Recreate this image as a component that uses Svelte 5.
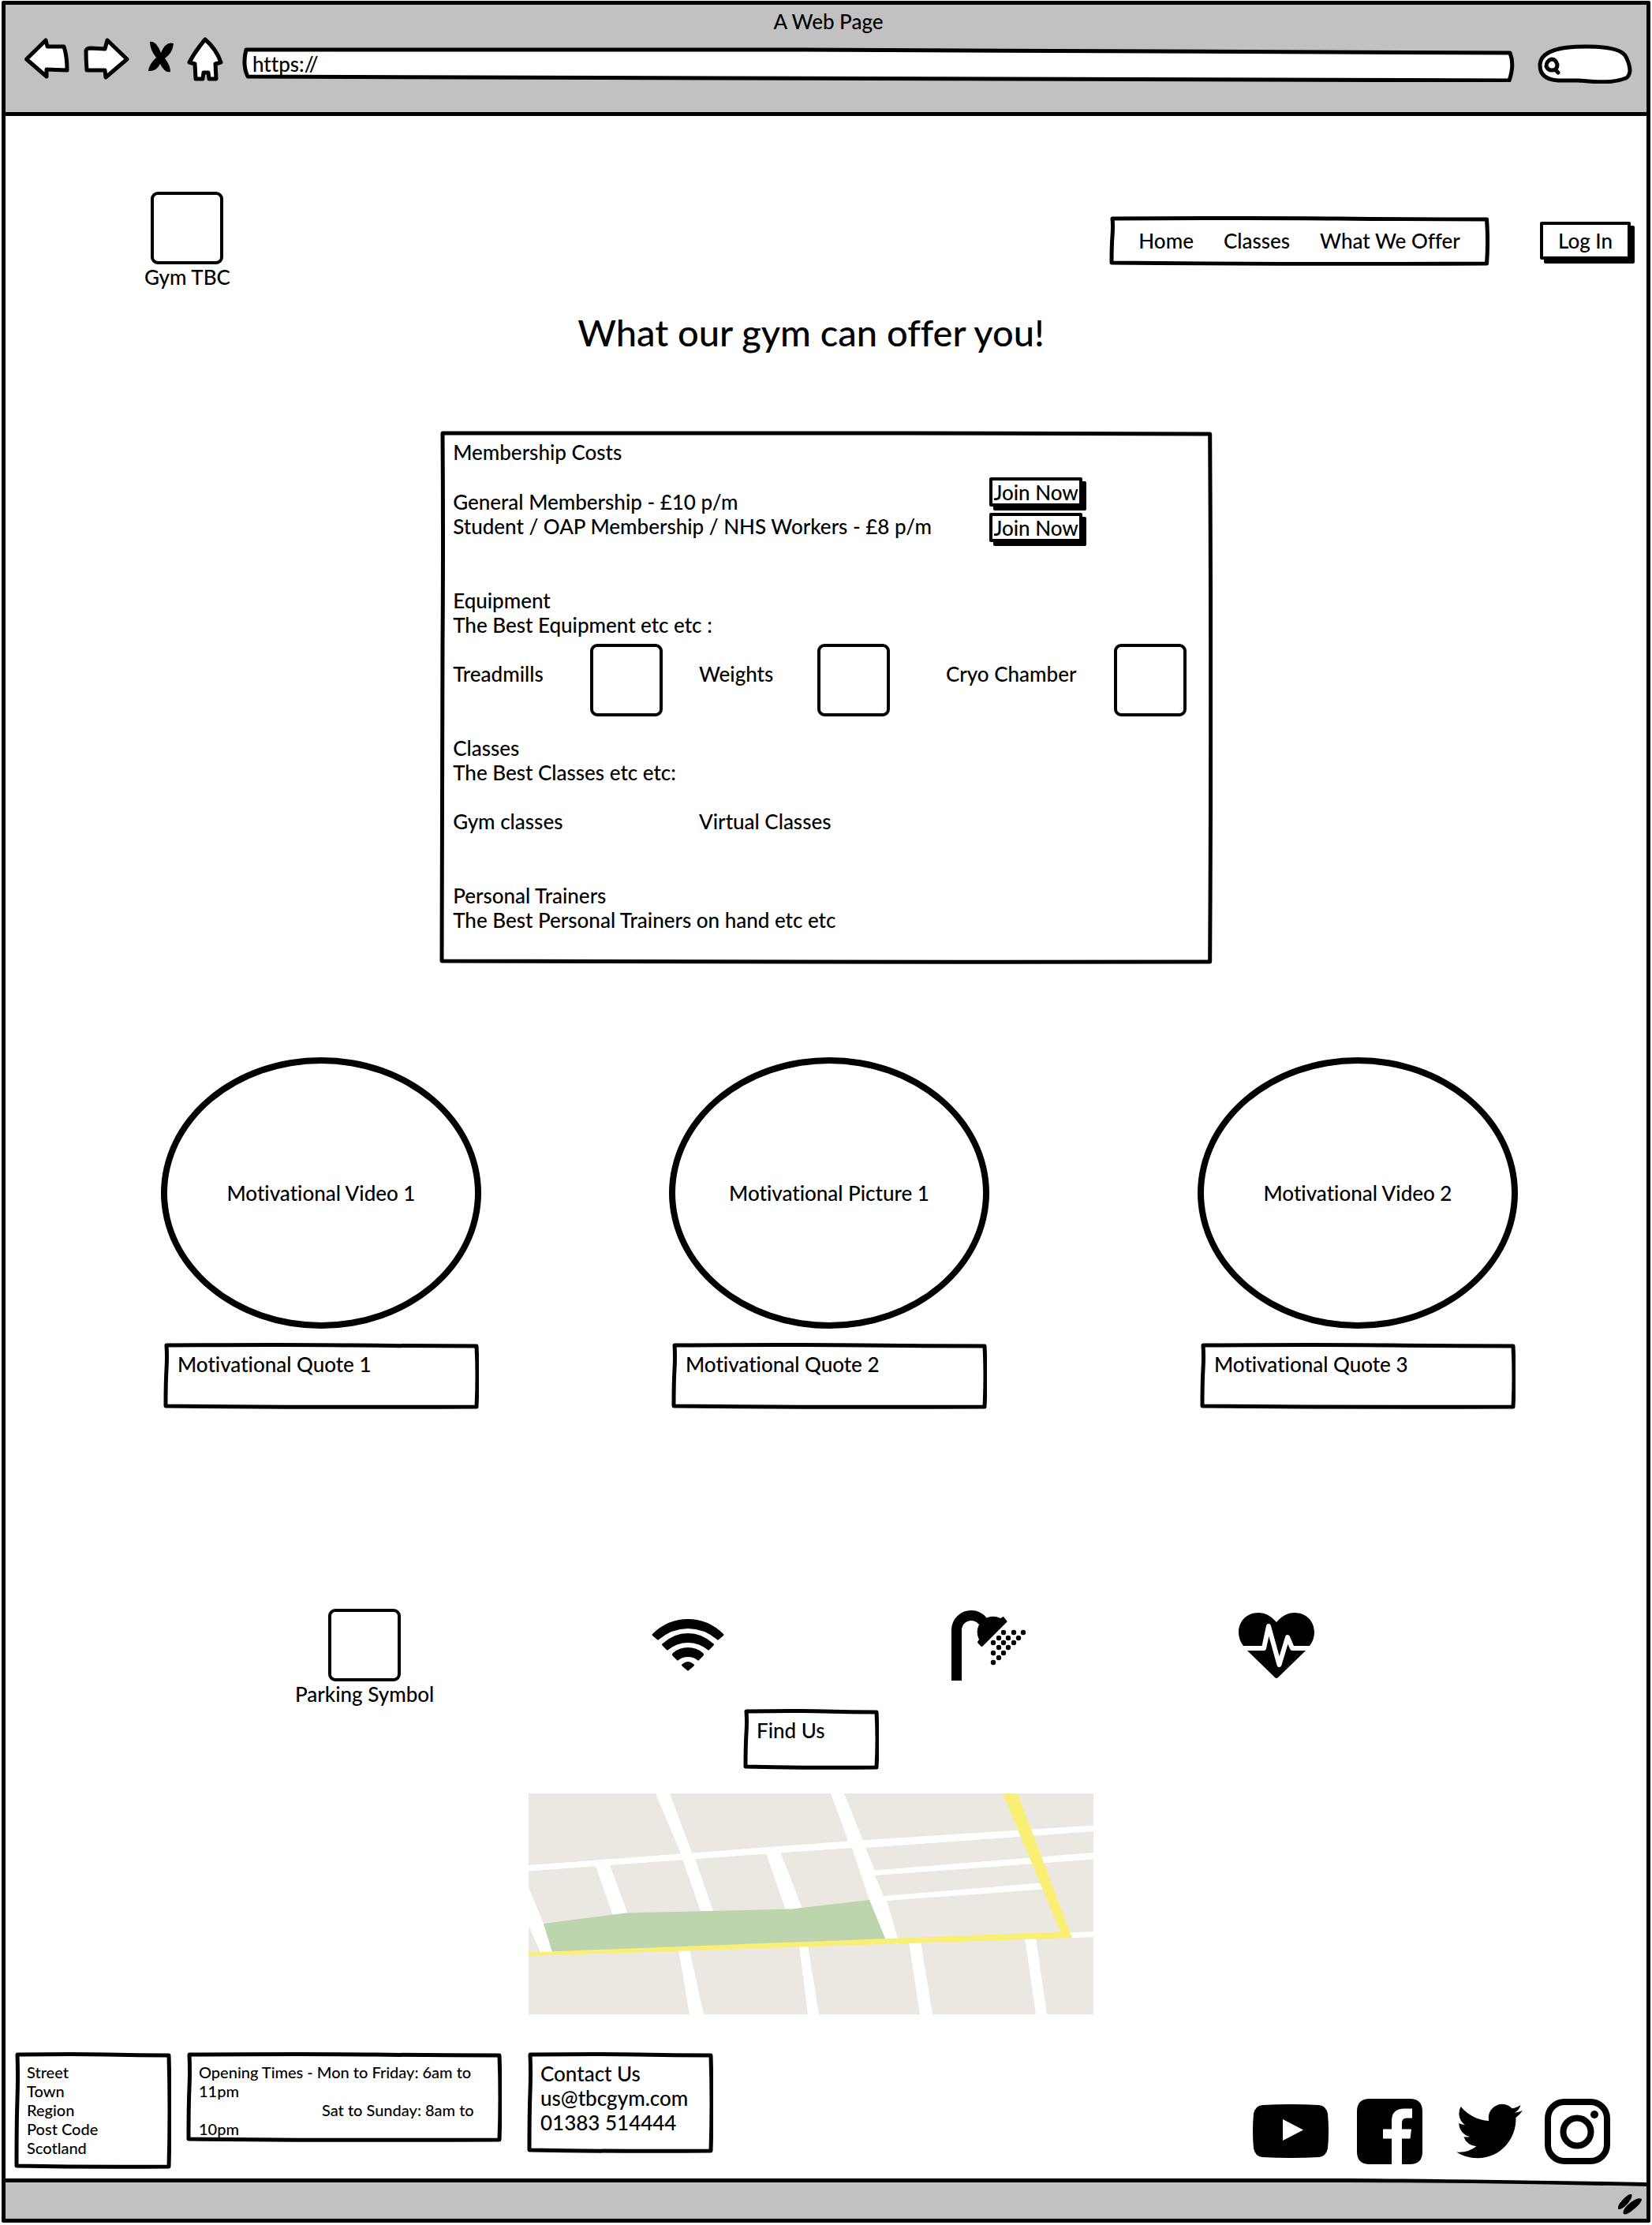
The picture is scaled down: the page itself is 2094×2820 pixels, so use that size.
<script>
  const pictures = [
    { title: 'Motivational Video 1', quote: 'Motivational Quote 1' },
    { title: 'Motivational Picture 1', quote: 'Motivational Quote 2' },
    { title: 'Motivational Video 2', quote: 'Motivational Quote 3' },
  ];

  const address = ['Street', 'Town', 'Region', 'Post Code', 'Scotland'];

  const drops = [
    [66, 28], [79, 28], [91, 28],
    [60, 35], [72, 35], [85, 35],
    [53, 41], [66, 41], [79, 41],
    [60, 47], [72, 47],
    [53, 54], [66, 54],
    [60, 60],
    [53, 66],
  ];

  // Outline of a box whose sides bow slightly, as if drawn by hand.
  function outline(w, h) {
    return `M4 3 Q${w * 0.4} 2 ${w * 0.6} 3 T${w - 3} 4 Q${w - 1} ${h * 0.5} ${w - 3} ${h - 3} Q${w * 0.5} ${h - 2} 3 ${h - 4} Q3 ${h * 0.6} 4 ${h * 0.4} T4 3 Z`;
  }
</script>

{#snippet sketch(w, h)}
  <svg class="sketch" viewBox="0 0 {w} {h}" preserveAspectRatio="none" aria-hidden="true">
    <path d={outline(w, h)} />
  </svg>
{/snippet}

<div class="browser">
  <header class="toolbar">
    <div class="page-title">A Web Page</div>
    <div class="controls">
      <button class="tool back" aria-label="Back">
        <svg viewBox="0 0 57 54" width="57" height="54">
          <path class="ink" d="M2.5 28 L27 4 L29 12 L50 12 Q54 24 54 42 L28 41 L28 50 Z" />
        </svg>
      </button>
      <button class="tool forward" aria-label="Forward">
        <svg viewBox="0 0 59 54" width="59" height="54">
          <path class="ink" d="M4 17 Q5 14 10 14 L28 15 L31 4 L56 28 L29 51 L28 42 L5 42 Q4 28 4 17 Z" />
        </svg>
      </button>
      <button class="tool stop" aria-label="Stop">
        <svg viewBox="0 0 34 54" width="34" height="54">
          <path d="M3 6 Q11 4 17 20 Q23 5 33 8 Q32 20 22 27 Q29 36 29 44 Q22 46 16 34 Q11 44 1 43 Q2 34 11 26 Q3 16 3 6 Z" />
        </svg>
      </button>
      <button class="tool home" aria-label="Home page">
        <svg viewBox="0 0 46 56" width="46" height="56">
          <path class="ink" d="M23 3 Q37 15 43 32 L36 34 L37 53 L28 53 L27 45 L21 45 L20 53 L11 53 L10 34 L3 32 Q11 17 23 3 Z" />
        </svg>
      </button>
      <div class="url">
        <svg class="sketch" viewBox="0 0 1612 44" preserveAspectRatio="none" aria-hidden="true">
          <path d="M5 3 L700 3 Q1200 4 1606 7 Q1612 22 1605 42 L600 39 L7 37 Q0 22 5 3 Z" />
        </svg>
        <input type="text" value="https://" aria-label="Address" />
      </div>
      <div class="search">
        <svg class="sketch" viewBox="0 0 120 50" preserveAspectRatio="none" aria-hidden="true">
          <path d="M3 27 C3 9 26 3 62 3 C92 3 108 8 112 16 Q117 26 117 34 Q116 41 112 43 C94 50 76 48 52 46 Q42 46 26 46 C10 45 3 38 3 27 Z" />
        </svg>
        <svg class="lens" viewBox="0 0 21 23" width="21" height="23" aria-hidden="true">
          <path d="M10 3 C5 4 3 8 3 12 Q5 17 10 17 Q17 17 17 10 Q15 3 10 3 M14 16 L18 20" />
        </svg>
        <input type="search" aria-label="Search" />
      </div>
    </div>
  </header>

  <main>
    <div class="top">
      <div class="labelled">
        <div class="placeholder"></div>
        <span>Gym TBC</span>
      </div>
      <nav>
        {@render sketch(480, 64)}
        <a href="#home">Home</a>
        <a href="#classes">Classes</a>
        <a href="#offer">What We Offer</a>
      </nav>
      <button class="raised login">Log In</button>
    </div>

    <h1>What our gym can offer you!</h1>

    <section class="panel" id="offer">
      {@render sketch(980, 675)}
      <div class="membership">
        <div>
          <h2>Membership Costs</h2>
          <div class="plans">
            <p>General Membership - £10 p/m</p>
            <p>Student / OAP Membership / NHS Workers - £8 p/m</p>
          </div>
        </div>
        <div class="joins">
          <button class="raised" aria-label="Join Now, general">Join Now</button>
          <button class="raised" aria-label="Join Now, student">Join Now</button>
        </div>
      </div>

      <div class="block">
        <h2>Equipment</h2>
        <p>The Best Equipment etc etc :</p>
        <div class="columns kit">
          <span>Treadmills</span>
          <div class="placeholder"></div>
          <span>Weights</span>
          <div class="placeholder"></div>
          <span>Cryo Chamber</span>
          <div class="placeholder"></div>
        </div>
      </div>

      <div class="block" id="classes">
        <h2>Classes</h2>
        <p>The Best Classes etc etc:</p>
        <div class="columns kinds">
          <span class="wide">Gym classes</span>
          <span class="wide">Virtual Classes</span>
        </div>
      </div>

      <div class="block">
        <h2>Personal Trainers</h2>
        <p>The Best Personal Trainers on hand etc etc</p>
      </div>
    </section>

    <section class="gallery">
      {#each pictures as item}
        <figure>
          <div class="oval">{item.title}</div>
          <figcaption>
            {@render sketch(400, 84)}
            {item.quote}
          </figcaption>
        </figure>
      {/each}
    </section>

    <section class="amenities">
      <div class="labelled">
        <div class="placeholder"></div>
        <span>Parking Symbol</span>
      </div>
      <div class="slot">
        <svg viewBox="0 0 92 66" width="92" height="66" role="img" aria-label="Wi-Fi">
          <path d="M1 19 Q20 0 46 0 Q72 0 91 19 Q92 20 91 21 L85 26 Q84 27 83 26 Q66 12 46 12 Q26 12 9 26 Q8 27 7 26 L1 21 Q0 20 1 19 Z" />
          <path d="M14 31 Q28 18 46 18 Q64 18 78 31 Q80 32 78 34 L73 39 Q72 40 71 39 Q60 30 46 30 Q32 30 21 39 Q20 40 19 39 L14 34 Q12 32 14 31 Z" />
          <path d="M27 43 Q35 36 46 36 Q57 36 65 43 Q67 45 65 47 L60 52 Q59 53 58 52 Q53 48 46 48 Q39 48 34 52 Q33 53 32 52 L27 47 Q25 45 27 43 Z" />
          <path d="M39 57 Q46 51 53 57 Q55 58 53 60 L47 65 Q46 66 45 65 L39 60 Q37 58 39 57 Z" />
        </svg>
      </div>
      <div class="slot">
        <svg viewBox="0 0 95 89" width="95" height="89" role="img" aria-label="Showers">
          <path class="pipe" d="M6.5 89 V25 A18.500 18.500 0 0 1 25 6.500 Q34 6.500 40 14" />
          <path d="M62 10 A20 20 0 0 0 35 37 L33 40 Q33 41 34 42 L38 46 Q39 46 40 45 L70 15 Q71 14 70 13 L66 8 Q65 8 64 9 Z" />
          {#each drops as [x, y]}
            <circle cx={x} cy={y} r="3.2" />
          {/each}
        </svg>
      </div>
      <div class="slot">
        <svg viewBox="0 0 96 83" width="96" height="83" role="img" aria-label="Heart rate">
          <path d="M48 12 C41 4 34 0 25 0 C10 0 0 11 0 25 Q0 34 6 42 Q8 46 12 49 L46 82 Q48 84 50 82 L84 49 Q88 46 90 42 Q96 34 96 25 C96 11 86 0 71 0 C62 0 55 4 48 12 Z" />
          <path class="pulse" d="M-2 45 H32 L38 17 L51.500 66 L62 31 L68 45 H98" />
        </svg>
      </div>
    </section>

    <section class="find">
      <div class="note find-us">
        {@render sketch(172, 77)}
        Find Us
      </div>
      <svg class="map" viewBox="0 0 716 280" role="img" aria-label="Map">
        <rect width="716" height="280" fill="#ebe8e1" />
        <g fill="#fff">
          <path d="M161 0 H179 L207 75 L211 83 L234 149 H218 L196 86 L193 76 Z" />
          <path d="M0 91 L193 76.500 L405 60.500 L716 40.500 V48 L427 69 L410 69 L211 83 L0 98.500 Z" />
          <path d="M383 0 H400 L424 60 L427 69 L439 98 V104 L450 130 L454 136 L468 184 H452 L432 135 L410 69 L405 60 Z" />
          <path d="M438 97.500 L716 75 V83.500 L438 104 Z" />
          <path d="M449 130 L649 113.500 L666 120 L652 121.500 L453 136 Z" />
          <path d="M85 92 L103 91 L126 153 L107 155 Z" />
          <path d="M301 76 L319 74 L347 146 L326 148 Z" />
          <path d="M0 119 L19 165 L30 201 H15 L0 168 Z" />
          <path d="M686 176.500 L716 175 V182 L688 183 Z" />
          <path d="M190 198 H204 L222 280 H204 Z" />
          <path d="M343 193 H354 L368 280 H354 Z" />
          <path d="M482 188 H497 L512 280 H496 Z" />
          <path d="M629 183 H643 L657 280 H643 Z" />
        </g>
        <path fill="#bcd5ad" d="M19 165 L124 151.500 L334 146.500 L432 135 L452.500 185 L30 201 Z" />
        <path fill="#faef75" d="M601 0 H620 L689 183 L0 206 V201.500 L674 175.500 Z" />
      </svg>
    </section>

    <footer>
      <address class="note small where">
        {@render sketch(199, 148)}
        {#each address as line}
          <div>{line}</div>
        {/each}
      </address>
      <div class="note small hours">
        {@render sketch(400, 114)}
        <div>Opening Times - Mon to Friday: 6am to</div>
        <div>11pm</div>
        <div class="indent">Sat to Sunday: 8am to</div>
        <div>10pm</div>
      </div>
      <div class="note contact">
        {@render sketch(236, 128)}
        <div>Contact Us</div>
        <div>us@tbcgym.com</div>
        <div>01383 514444</div>
      </div>
      <div class="social">
        <a href="#youtube" aria-label="YouTube">
          <svg viewBox="0 0 96 68" width="96" height="68">
            <path fill-rule="evenodd" d="M12 1 Q48 -1 84 1 Q93 2 95 12 Q97 34 95 56 Q93 66 84 67 Q48 69 12 67 Q3 66 1 56 Q-1 34 1 12 Q3 2 12 1 Z M38 19 V46 L64 32.500 Z" />
          </svg>
        </a>
        <a href="#facebook" aria-label="Facebook">
          <svg viewBox="0 0 83 83" width="83" height="83">
            <path d="M16 0 H67 Q83 0 83 16 V67 Q83 83 67 83 H57 V50.500 H67.500 L69 38.500 H57 V31 Q57 24.500 63 24.500 H70 V12.500 H60 Q44 12.500 44 28 V38.500 H33 V50.500 H44 V83 H16 Q0 83 0 67 V16 Q0 0 16 0 Z" />
          </svg>
        </a>
        <a href="#twitter" aria-label="Twitter">
          <svg viewBox="0 0 24 24" width="84" height="84">
            <path d="M23.953 4.57a10 10 0 01-2.825.775 4.958 4.958 0 002.163-2.723c-.951.555-2.005.959-3.127 1.184a4.92 4.92 0 00-8.384 4.482C7.69 8.095 4.067 6.13 1.64 3.162a4.822 4.822 0 00-.666 2.475c0 1.71.87 3.213 2.188 4.096a4.904 4.904 0 01-2.228-.616v.06a4.923 4.923 0 003.946 4.827 4.996 4.996 0 01-2.212.085 4.936 4.936 0 004.604 3.417 9.867 9.867 0 01-6.102 2.105c-.39 0-.779-.023-1.17-.067a13.995 13.995 0 007.557 2.209c9.053 0 13.998-7.496 13.998-13.985 0-.21 0-.42-.015-.63A9.935 9.935 0 0024 4.59z" />
          </svg>
        </a>
        <a href="#instagram" aria-label="Instagram">
          <svg viewBox="0 0 83 83" width="83" height="83">
            <rect class="ring" x="4" y="4" width="75" height="75" rx="21" />
            <circle class="ring" cx="41" cy="42" r="17.500" />
            <circle cx="63" cy="20" r="5" />
          </svg>
        </a>
      </div>
    </footer>
  </main>

  <div class="status">
    <svg class="edge" viewBox="0 0 2080 10" preserveAspectRatio="none" aria-hidden="true">
      <path fill="#fff" d="M0 0 H2080 V6 L1830 2 H0 Z" />
      <path d="M0 0 H1700 Q1850 1 2080 5 V10 Q1850 5 1700 5 H0 Z" />
    </svg>
    <svg class="grip" viewBox="0 0 31 26" width="31" height="26" aria-hidden="true">
      <path d="M0 19 Q-1 14 5 8 Q13 -1 17 0 Q19 3 13 11 Q6 19 1 19 Z" />
      <path d="M7 25 Q5 20 13 13 Q24 3 30 6 Q30 11 20 19 Q11 27 7 25 Z" />
    </svg>
  </div>
</div>

<style>
  :global(body) {
    background: #fff;
  }

  .browser {
    margin: 1px 2px;
    border: 5px solid #000;
    border-radius: 2px;
    font-family: Lato, "Liberation Sans", sans-serif;
    font-size: 26px;
    font-weight: 500;
    font-variant-ligatures: none;
    line-height: 31px;
    color: #000;
  }

  button,
  input {
    font: inherit;
    color: inherit;
    padding: 0;
    border: 0;
    background: none;
  }

  a {
    color: inherit;
    text-decoration: none;
  }

  h1,
  h2,
  p,
  figure {
    margin: 0;
    font-weight: inherit;
  }

  h2 {
    font-size: inherit;
  }

  svg {
    display: block;
  }

  .sketch {
    position: absolute;
    inset: 0;
    width: 100%;
    height: 100%;
    z-index: -1;
  }

  .sketch path {
    fill: #fff;
    stroke: #000;
    stroke-width: 5px;
    stroke-linejoin: round;
  }

  .toolbar {
    background: #c1c1c1;
    border-bottom: 5px solid #000;
    padding: 6px 18px 36px 24px;
  }

  .page-title {
    text-align: center;
  }

  .controls {
    display: flex;
    align-items: flex-start;
    padding-top: 4px;
  }

  .tool {
    flex: none;
  }

  .forward {
    margin-left: 17px;
  }

  .stop {
    margin-left: 23px;
  }

  .home {
    margin-left: 16px;
  }

  .ink {
    fill: #fff;
    stroke: #000;
    stroke-width: 5px;
    stroke-linejoin: round;
  }

  .url {
    position: relative;
    z-index: 0;
    flex: 1;
    height: 44px;
    margin: 13px 29px 0 24px;
    padding: 4px 13px;
    box-sizing: border-box;
  }

  .url input {
    display: block;
    width: 100%;
    height: 33px;
  }

  .search {
    position: relative;
    z-index: 0;
    flex: none;
    display: flex;
    width: 120px;
    height: 50px;
    margin-top: 9px;
    padding: 16px 12px 0 8px;
    box-sizing: border-box;
  }

  .search input {
    flex: 1;
    min-width: 0;
    height: 23px;
  }

  .lens {
    flex: none;
    fill: none;
    stroke: #000;
    stroke-width: 5px;
    stroke-linecap: round;
  }

  .top {
    display: flex;
    align-items: center;
    padding: 96px 20px 0 176px;
  }

  .labelled {
    display: flex;
    flex-direction: column;
    align-items: center;
    gap: 1px;
    width: max-content;
  }

  .placeholder {
    width: 92px;
    height: 92px;
    box-sizing: border-box;
    border: 4px solid #000;
    border-radius: 9px;
    background: #fff;
  }

  nav {
    position: relative;
    z-index: 0;
    display: flex;
    gap: 38px;
    margin-left: auto;
    padding: 16px 37px;
  }

  .raised {
    height: 37px;
    padding: 0 1px;
    border: 4px solid #000;
    border-radius: 2px;
    background: #fff;
    box-shadow: 5px 5px 0 #000;
    line-height: 28px;
    white-space: nowrap;
  }

  .login {
    height: 48px;
    margin-left: 64px;
    padding: 0 19px;
  }

  h1 {
    margin: 26px 38px 0 0;
    font-size: 47px;
    line-height: 56px;
    text-align: center;
  }

  .panel {
    position: relative;
    z-index: 0;
    width: 47.1%;
    margin: 97px auto 0;
    padding: 12px 17px 40px;
    box-sizing: border-box;
  }

  .membership {
    display: flex;
    justify-content: space-between;
    padding-right: 148px;
  }

  .plans {
    margin-top: 32px;
  }

  .joins {
    display: flex;
    flex-direction: column;
    gap: 8px;
    padding-top: 47px;
    margin-bottom: -4px;
  }

  .block {
    margin-top: 63px;
  }

  .columns {
    display: grid;
    grid-template-columns: 174fr 138fr 150fr 163fr 213fr 108fr;
  }

  .kit {
    margin-top: 8px;
    margin-bottom: -38px;
  }

  .kit span {
    padding-top: 23px;
  }

  .kinds {
    margin-top: 31px;
  }

  .wide {
    grid-column: span 2;
  }

  .gallery {
    display: grid;
    grid-template-columns: 644fr 670fr 569fr;
    margin-top: 118px;
    padding-left: 197px;
  }

  figure {
    width: 406px;
  }

  .oval {
    display: flex;
    align-items: center;
    justify-content: center;
    height: 344px;
    box-sizing: border-box;
    border: 8px solid #000;
    border-radius: 50%;
  }

  figcaption {
    position: relative;
    z-index: 0;
    height: 84px;
    margin: 18px 3px 0;
    padding: 12px 18px;
    box-sizing: border-box;
  }

  .amenities {
    display: grid;
    grid-template-columns: 452fr 380fr 364fr 517fr;
    margin-top: 253px;
    padding-left: 367px;
  }

  .slot {
    display: flex;
    align-items: center;
    height: 92px;
  }

  .pipe {
    fill: none;
    stroke: #000;
    stroke-width: 13px;
  }

  .pulse {
    fill: none;
    stroke: #fff;
    stroke-width: 6px;
    stroke-linejoin: round;
  }

  .find {
    display: flex;
    flex-direction: column;
    align-items: center;
    gap: 30px;
    margin: 3px 38px 0 0;
  }

  .note {
    position: relative;
    z-index: 0;
    box-sizing: border-box;
    padding: 12px 17px;
  }

  .find-us {
    width: 172px;
    height: 77px;
  }

  .map {
    width: 716px;
  }

  footer {
    display: flex;
    align-items: flex-start;
    margin-top: 48px;
    padding: 0 46px 12px 11px;
  }

  .small {
    font-size: 20px;
    line-height: 24px;
    font-style: normal;
    padding: 13px 16px;
  }

  .where {
    width: 199px;
    height: 148px;
  }

  .hours {
    width: 400px;
    height: 114px;
    margin-left: 19px;
  }

  .indent {
    padding-left: 156px;
  }

  .contact {
    width: 236px;
    height: 128px;
    margin-left: 32px;
  }

  .social {
    display: grid;
    grid-template-columns: 132px 126px 112px 83px;
    align-items: center;
    align-self: flex-end;
    margin: 0 0 6px auto;
  }

  .ring {
    fill: none;
    stroke: #000;
    stroke-width: 8px;
  }

  .status {
    display: flex;
    flex-direction: column;
    align-items: flex-end;
    height: 51px;
    background: #c1c1c1;
  }

  .edge {
    width: 100%;
    height: 10px;
  }

  .grip {
    margin: 10px 5px 0 0;
  }
</style>
